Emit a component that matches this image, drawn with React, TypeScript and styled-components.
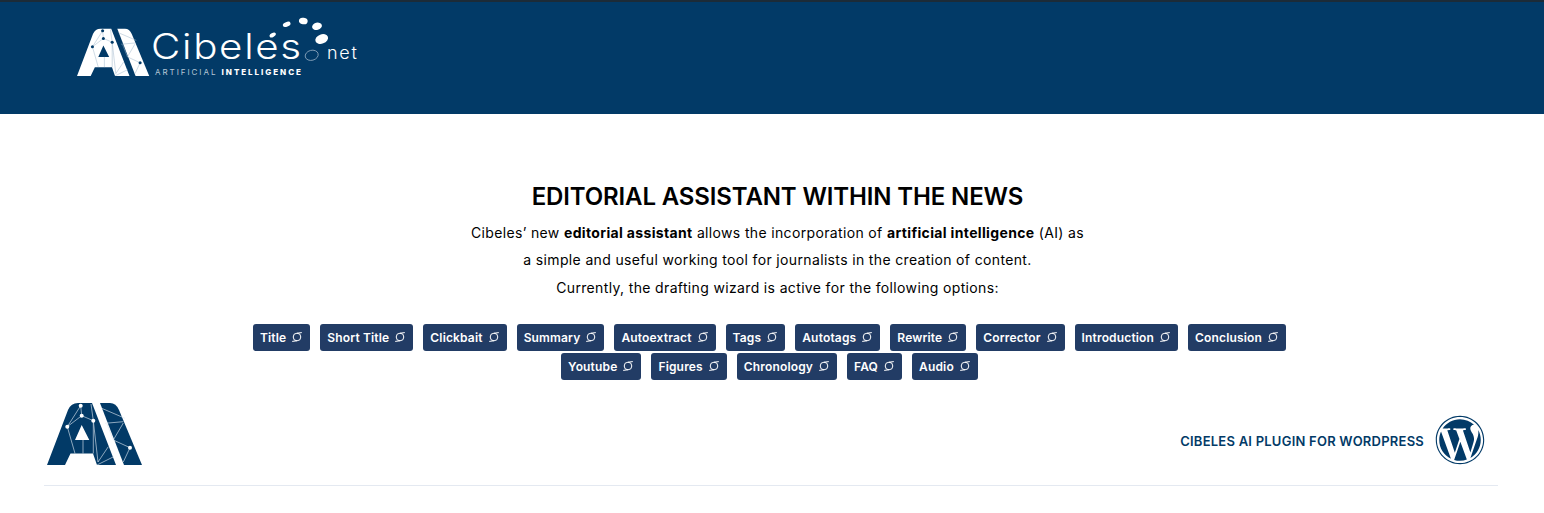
import styled, { createGlobalStyle } from "styled-components";
import { FaWordpress } from "react-icons/fa";

const navy = "#023a67";

const GlobalStyle = createGlobalStyle`
  html, body {
    margin: 0;
    padding: 0;
    background: #fff;
    font-family: "Inter", "Liberation Sans", sans-serif;
  }
`;

const row1 = ["Title", "Short Title", "Clickbait", "Summary", "Autoextract", "Tags", "Autotags", "Rewrite", "Corrector", "Introduction", "Conclusion"];
const row2 = ["Youtube", "Figures", "Chronology", "FAQ", "Audio"];

type MarkProps = { fill: string; line: string; dot: string; width: number };

// the AI mark, used big in the footer and white in the header
const AiMark = ({ fill, line, dot, width }: MarkProps) => (
  <svg width={width} viewBox="0 0 96 63" style={{ display: "block", flex: "none" }}>
    <path
      fill={fill}
      fillRule="evenodd"
      d="M0 63 L21 8 Q24 1 31 1 L45 1 L69 63 L50 63 L46 51.5 L23.5 51.5 L18 63 Z M34.7 23 L28 38 L42.3 38 Z"
    />
    <path fill={fill} d="M53 1 L63 1 Q69 1 72 8 L95 63 L77 63 Z" />
    <g stroke={line} strokeWidth="0.7" fill="none" opacity="0.9">
      <path d="M33.7 3.7 L20.3 24.7 L34.7 13.7 L33.7 3.7 M34.7 13.7 L46.3 18.7 L44 2 M20.3 24.7 L28 51.5 M36 38 L36 51.5 M46.3 18.7 L46.3 51.5 M46.3 18.7 L51 60 M51 60 L61.3 44.7 M50 63 L66.7 54.7" />
      <path d="M54.7 6.3 L78 16.3 M58 21.3 L76.3 19.7 M76.3 21 L66.3 38 L83 45.7 L76.3 60 M66.3 38 L60 22" />
    </g>
    <g fill={dot}>
      <circle cx="33.7" cy="3.7" r="2" />
      <circle cx="34.7" cy="13.7" r="2" />
      <circle cx="20.3" cy="24.7" r="2" />
      <circle cx="46.3" cy="18.7" r="2" />
      <circle cx="83" cy="45.7" r="2" />
    </g>
  </svg>
);

const SyncIcon = () => (
  <svg width="12" height="12" viewBox="0 0 12 12" fill="none" stroke="#fff" strokeWidth="1" style={{ flex: "none" }}>
    <circle cx="6" cy="6" r="3.8" />
    <path d="M6 2.2 L10.8 1.6 M6 9.8 L1.2 10.4" />
  </svg>
);

const App = () => (
  <>
    <GlobalStyle />
    <Header>
      <Logo>
        <AiMark fill="#fff" line="#9db5ca" dot={navy} width={73} />
        <LogoText>
          <Wordmark>
            <Brand>Cibeles</Brand>
            <Net>net</Net>
          </Wordmark>
          <Tagline>
            ARTIFICIAL <b>INTELLIGENCE</b>
          </Tagline>
        </LogoText>
        <Swoosh viewBox="0 0 70 50" width="70" height="50">
          <g fill="#fff">
            <ellipse cx="7.7" cy="21" rx="3.4" ry="2" transform="rotate(-30 7.7 21)" />
            <ellipse cx="21.7" cy="10.3" rx="4" ry="2.3" transform="rotate(-20 21.7 10.3)" />
            <ellipse cx="38.3" cy="7" rx="4.4" ry="3.2" transform="rotate(10 38.3 7)" />
            <ellipse cx="52" cy="12.3" rx="5" ry="3.6" transform="rotate(-15 52 12.3)" />
            <ellipse cx="56.7" cy="25" rx="6.6" ry="4.6" transform="rotate(-20 56.7 25)" />
          </g>
          <ellipse cx="46.7" cy="41.3" rx="6.6" ry="5" fill="none" stroke="#8fa8bf" strokeWidth="0.8" transform="rotate(-15 46.7 41.3)" />
        </Swoosh>
      </Logo>
    </Header>
    <Main>
      <Intro>
        <Title>EDITORIAL ASSISTANT WITHIN THE NEWS</Title>
        <Text>
          Cibeles’ new <b>editorial assistant</b> allows the incorporation of <b>artificial intelligence</b> (AI) as
        </Text>
        <Text>a simple and useful working tool for journalists in the creation of content.</Text>
        <Text>Currently, the drafting wizard is active for the following options:</Text>
      </Intro>
      <Tags>
        <TagRow>
          {row1.map((t) => (
            <Tag key={t}>
              {t} <SyncIcon />
            </Tag>
          ))}
        </TagRow>
        <TagRow>
          {row2.map((t) => (
            <Tag key={t}>
              {t} <SyncIcon />
            </Tag>
          ))}
        </TagRow>
      </Tags>
    </Main>
    <Footer>
      <AiMark fill={navy} line="#dfe8f0" dot="#fff" width={96} />
      <Plugin>
        <PluginLabel>CIBELES AI PLUGIN FOR WORDPRESS</PluginLabel>
        <FaWordpress size={50} color={navy} />
      </Plugin>
    </Footer>
  </>
);

const Header = styled.header`
  box-sizing: border-box;
  height: 114px;
  background: ${navy};
  border-top: 2px solid #1c2b38;
  padding: 26px 0 0 77px;
`;

const Logo = styled.div`
  position: relative;
  display: flex;
  align-items: flex-end;
  gap: 1px;
  width: 285px;
  height: 48px;
`;

const LogoText = styled.div`
  display: flex;
  flex-direction: column;
  gap: 6px;
  color: #fff;
`;

const Wordmark = styled.div`
  display: flex;
  align-items: baseline;
  line-height: 30px;
`;

const Brand = styled.span`
  display: inline-block;
  font-weight: 300;
  font-size: 35px;
  letter-spacing: 1.5px;
  transform: scaleX(1.15);
  transform-origin: left center;
`;

const Net = styled.span`
  margin-left: 44px;
  font-size: 18px;
  line-height: 1;
  font-weight: 300;
  letter-spacing: 1.7px;
`;

const Tagline = styled.div`
  margin-left: 4px;
  font-size: 8px;
  line-height: 8px;
  letter-spacing: 1.95px;
  color: #b6c7d6;
  white-space: pre;

  b {
    color: #fff;
    font-weight: 800;
  }
`;

const Swoosh = styled.svg`
  position: absolute;
  left: 188px;
  top: -14px;
`;

const Main = styled.main`
  display: flex;
  flex-direction: column;
  align-items: center;
`;

const Intro = styled.div`
  padding: 68px 0 0 11px;
  text-align: center;
`;

const Title = styled.h1`
  margin: 0 0 7px;
  font-size: 24px;
  line-height: 30px;
  font-weight: 600;
  color: #000;
  letter-spacing: -0.13px;
`;

const Text = styled.p`
  margin: 0;
  font-size: 14px;
  line-height: 27.3px;
  color: #000;
  white-space: nowrap;
  letter-spacing: 0.35px;

  b {
    font-weight: 700;
  }
`;

const Tags = styled.div`
  display: flex;
  flex-direction: column;
  gap: 2px;
  margin-top: 23px;
  padding-right: 5px;
`;

const TagRow = styled.div`
  display: flex;
  justify-content: center;
  gap: 10px;
`;

const Tag = styled.span`
  box-sizing: border-box;
  display: inline-flex;
  align-items: center;
  gap: 5px;
  height: 27px;
  padding: 0 7px;
  border-radius: 3px;
  background: #223c65;
  color: #fff;
  font-size: 12px;
  font-weight: 600;
  letter-spacing: 0.16px;
  white-space: nowrap;
`;

const Footer = styled.footer`
  box-sizing: border-box;
  display: flex;
  justify-content: space-between;
  align-items: flex-end;
  margin: 22px 46px 0 44px;
  padding: 0 13px 20px 3px;
  border-bottom: 1px solid #e4e9f1;
`;

const Plugin = styled.div`
  display: flex;
  align-items: center;
  gap: 11px;
  color: ${navy};
  font-size: 13px;
  font-weight: 600;
  letter-spacing: 0.23px;
`;

const PluginLabel = styled.span`
  padding-top: 2px;
`;

export default App;
